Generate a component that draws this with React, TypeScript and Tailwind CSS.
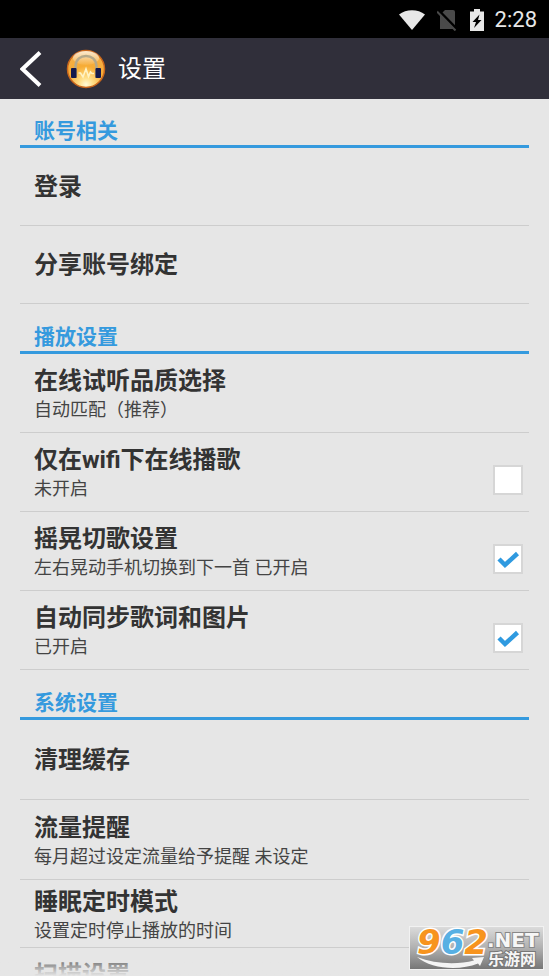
import React, { useState } from 'react';
import clsx from 'clsx';

type SettingItem = {
    id: string;
    title: string;
    desc?: string;
    checkable?: boolean;
};

type SettingGroup = {
    name: string;
    rowClass: string;
    items: SettingItem[];
};

const groups: SettingGroup[] = [
    {
        name: '账号相关',
        rowClass: 'min-h-[78px]',
        items: [
            { id: 'login', title: '登录' },
            { id: 'share', title: '分享账号绑定' },
        ],
    },
    {
        name: '播放设置',
        rowClass: 'min-h-[79px]',
        items: [
            { id: 'quality', title: '在线试听品质选择', desc: '自动匹配（推荐）' },
            { id: 'wifi', title: '仅在wifi下在线播歌', desc: '未开启', checkable: true },
            {
                id: 'shake',
                title: '摇晃切歌设置',
                desc: '左右晃动手机切换到下一首 已开启',
                checkable: true,
            },
            { id: 'lyric', title: '自动同步歌词和图片', desc: '已开启', checkable: true },
        ],
    },
    {
        name: '系统设置',
        rowClass: 'min-h-20 last:min-h-[54px] nth-3:min-h-[68px]',
        items: [
            { id: 'cache', title: '清理缓存' },
            { id: 'traffic', title: '流量提醒', desc: '每月超过设定流量给予提醒 未设定' },
            { id: 'sleep', title: '睡眠定时模式', desc: '设置定时停止播放的时间' },
            { id: 'scan', title: '扫描设置' },
        ],
    },
];

const StatusBar: React.FC = () => (
    <div className="flex h-[38px] shrink-0 items-center justify-end bg-black pt-0.5 pr-3 text-[#e8e8e8]">
        <svg className="mr-3 h-5 w-[26px]" viewBox="0 0 26 20" fill="currentColor">
            <path d="M0 4.5C7-1.3 19-1.3 26 4.5L13 20Z" />
        </svg>
        <svg className="mr-3 h-[22px] w-5" viewBox="0 0 20 22">
            <path d="M8 1h8a2 2 0 0 1 2 2v17H3V6Z" fill="#4a4a4a" />
            <path d="M1 1L20 20.5" stroke="#000" strokeWidth="3" />
            <path d="M0 2.5L18.5 21.5" stroke="#4a4a4a" strokeWidth="2" />
        </svg>
        <svg className="mr-2.5 h-[22px] w-4" viewBox="0 0 16 22">
            <path d="M5 0h6v2.5h4V22H1V2.5h4Z" fill="currentColor" />
            <path d="M10.5 5.500L3.5 13H7L5 19L12.5 11H9Z" fill="#000" />
        </svg>
        <span className="font-['Roboto',sans-serif] text-[22px] leading-6">2:28</span>
    </div>
);

const AppLogo: React.FC = () => (
    <svg className="size-10" viewBox="0 0 40 40" fill="none">
        <defs>
            <radialGradient id="orb" cx="50%" cy="92%" r="90%">
                <stop offset="0" stopColor="#fffbd8" />
                <stop offset="0.2" stopColor="#ffe08a" />
                <stop offset="0.55" stopColor="#f7ac35" />
                <stop offset="1" stopColor="#f5b04a" />
            </radialGradient>
            <linearGradient id="gloss" x1="0" y1="0" x2="0" y2="1">
                <stop offset="0" stopColor="#fff" stopOpacity="0.75" />
                <stop offset="1" stopColor="#fff" stopOpacity="0.05" />
            </linearGradient>
        </defs>
        <circle cx="20" cy="20" r="18.5" fill="url(#orb)" stroke="#c8661c" strokeWidth="1.5" />
        <ellipse cx="20" cy="9" rx="13" ry="7" fill="url(#gloss)" />
        <path
            d="M9.500 20V17C10 3.500 30 3.500 30.500 17V20"
            stroke="#b5a98a"
            strokeWidth="2.500"
        />
        <rect x="5" y="19" width="5.500" height="10" rx="1" fill="#141a4c" />
        <rect x="29.500" y="19" width="5.500" height="10" rx="1" fill="#141a4c" />
        <path d="M10.500 20v8.500M29.500 20v8.500" stroke="#6b5f5a" strokeWidth="1" />
        <path
            d="M12.500 24h2l2.500 4 3-8 2.500 7.500 2-4.500 1.500 1.500h2"
            stroke="#fff3c4"
            strokeWidth="1.600"
        />
    </svg>
);

const Header: React.FC = () => (
    <header className="flex h-[61px] shrink-0 items-center bg-[#302f3a] text-white">
        <button type="button" aria-label="返回" className="pl-5">
            <svg className="h-9 w-[22px]" viewBox="0 0 22 36" fill="none">
                <path d="M20 1.500L2.500 18L20 34.500" stroke="currentColor" strokeWidth="4" />
            </svg>
        </button>
        <div className="ml-6">
            <AppLogo />
        </div>
        <h1 className="ml-3 text-2xl">设置</h1>
    </header>
);

type RowProps = {
    item: SettingItem;
    checked: boolean;
    className: string;
    onToggle: (id: string) => void;
};

const SettingRow: React.FC<RowProps> = ({ item, checked, className, onToggle }) => {
    const text = (
        <span className={clsx('block', item.desc && 'pt-1')}>
            <span className="block text-2xl leading-[30px] font-bold">{item.title}</span>
            {item.desc && <span className="block text-lg leading-7 text-[#444]">{item.desc}</span>}
        </span>
    );

    return (
        <li className={clsx('flex border-b border-[#cdcdcd]', className)}>
            {item.checkable ? (
                <label htmlFor={item.id} className="flex flex-1 items-center justify-between pr-1.5 pl-3.5">
                    {text}
                    <span className="mb-4 grid self-end">
                        <input
                            id={item.id}
                            type="checkbox"
                            checked={checked}
                            onChange={() => onToggle(item.id)}
                            className="col-start-1 row-start-1 size-[30px] appearance-none border-2 border-[#d6d6d6] bg-white"
                        />
                        {checked && (
                            <svg
                                className="pointer-events-none col-start-1 row-start-1 size-[30px]"
                                viewBox="0 0 30 30"
                                fill="none"
                            >
                                <path d="M6 15L12 21L24.500 9.500" stroke="#2f9ae0" strokeWidth="4.500" />
                            </svg>
                        )}
                    </span>
                </label>
            ) : (
                <button type="button" className="flex flex-1 items-center pl-3.5 text-left">
                    {text}
                </button>
            )}
        </li>
    );
};

const Watermark: React.FC = () => (
    <svg className="absolute right-[5px] bottom-1.5 h-11 w-[135px]" viewBox="0 0 135 44">
        <defs>
            <linearGradient id="plate" x1="0" y1="0" x2="0" y2="1">
                <stop offset="0" stopColor="#dcdcdc" />
                <stop offset="0.5" stopColor="#b0b0b0" />
                <stop offset="1" stopColor="#757575" />
            </linearGradient>
        </defs>
        <rect x="0.500" y="0.500" width="134" height="43" fill="url(#plate)" stroke="#f2f2f2" />
        <path
            d="M8 31C26 38 48 39 65 34.500L63 32L75 31L71 40L69 37.500C50 45 22 43 8 31Z"
            fill="#f4f4f4"
        />
        <g fontFamily="'DejaVu Sans', sans-serif" fontWeight="bold" paintOrder="stroke">
            <text x="8" y="28" fontSize="34" fontStyle="italic" stroke="#fff" strokeWidth="3">
                <tspan fill="#f7941e">9</tspan>
                <tspan fill="#58b0e3">6</tspan>
                <tspan fill="#f7941e">2</tspan>
            </text>
            <text x="78" y="21" fontSize="20" fill="#f6f6f6" stroke="#888" strokeWidth="2">
                .NET
            </text>
        </g>
        <text
            x="79"
            y="39"
            fontSize="16"
            fontWeight="bold"
            fontFamily="'Noto Sans CJK SC', sans-serif"
            fill="#f6f6f6"
            stroke="#777"
            strokeWidth="2"
            paintOrder="stroke"
        >
            乐游网
        </text>
    </svg>
);

const App: React.FC = () => {
    const [checked, setChecked] = useState<Record<string, boolean>>({ shake: true, lyric: true });

    const handleToggle = (id: string) => {
        setChecked((prev) => ({ ...prev, [id]: !prev[id] }));
    };

    return (
        <div className="relative flex h-screen flex-col overflow-hidden bg-[#e6e6e6] font-['Roboto','Noto_Sans_CJK_SC',sans-serif] text-[#333]">
            <StatusBar />
            <Header />
            <main className="min-h-0 flex-1 space-y-px overflow-hidden px-5">
                {groups.map((group) => (
                    <section key={group.name}>
                        <h2 className="flex h-[49px] items-end border-b-3 border-[#359ade] pb-0.5 pl-3.5 text-[21px] leading-6 font-bold text-[#359ade]">
                            {group.name}
                        </h2>
                        <ul>
                            {group.items.map((item) => (
                                <SettingRow
                                    key={item.id}
                                    item={item}
                                    checked={!!checked[item.id]}
                                    className={group.rowClass}
                                    onToggle={handleToggle}
                                />
                            ))}
                        </ul>
                    </section>
                ))}
            </main>
            <div className="pointer-events-none absolute inset-x-0 bottom-0 h-5 bg-linear-to-b from-[#e6e6e6]/20 to-[#e6e6e6]" />
            <Watermark />
        </div>
    );
};

export default App;
